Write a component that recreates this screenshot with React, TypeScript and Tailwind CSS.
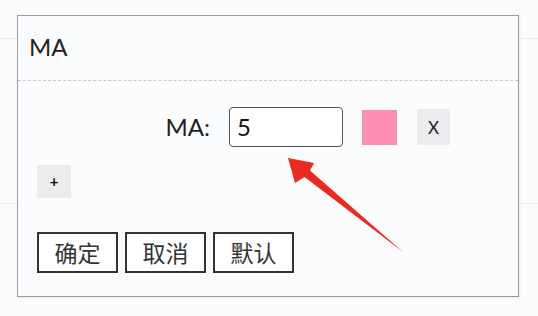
import React from "react";

export default function App() {
  const latin = { fontFamily: "Lato, 'Noto Sans CJK SC', sans-serif" };
  const cjk = { fontFamily: "'Noto Sans CJK SC', 'Noto Sans', sans-serif" };
  return (
    <div className="relative w-[538px] h-[316px] bg-[#fcfcfd] overflow-hidden" style={latin}>
      {/* background rows */}
      <div className="flex flex-col">
        <div className="h-[39px] border-b border-[#ececef]" />
        <div className="h-[165px] border-b border-[#ececef]" />
      </div>

      {/* dialog */}
      <div className="absolute left-[17px] top-[15px] w-[502px] h-[282px] bg-[#fbfcfe] border border-[#9c9ca6] shadow-[1px_1px_2px_rgba(0,0,0,0.08)] flex flex-col">
        <div className="h-[65px] border-b border-dashed border-[#c9c9ce] flex items-center pl-[11px] pb-[2px]">
          <span className="text-[24px] text-[#222] leading-none">MA</span>
        </div>

        <div className="flex items-center pt-[26px]">
          <div className="w-[192px] text-right text-[24px] text-[#222] leading-none">MA:</div>
          <div className="ml-[19px] w-[114px] h-[40px] border-[1.5px] border-[#555] rounded-[4px] bg-white flex items-center pl-[7px] text-[24px] text-[#111] leading-none">
            5
          </div>
          <div className="ml-[19px] w-[35px] h-[35px] bg-[#fd8fb4]" />
          <div className="ml-[20px] w-[33px] h-[36px] bg-[#ececee] flex items-center justify-center text-[17px] text-[#222] leading-none">
            X
          </div>
        </div>

        <div className="pl-[19px] pt-[18px]">
          <div className="w-[34px] h-[33px] bg-[#ececee] flex items-center justify-center text-[15px] font-bold text-[#111] leading-none">
            +
          </div>
        </div>

        <div className="flex gap-[7px] pl-[19px] pt-[34px]" style={cjk}>
          {["确定", "取消", "默认"].map((t) => (
            <div
              key={t}
              className="w-[81px] h-[41px] border-[2px] border-[#333] bg-white flex items-center justify-center text-[23px] text-[#333] leading-none"
            >
              {t}
            </div>
          ))}
        </div>
      </div>

      {/* annotation arrow */}
      <svg className="absolute left-0 top-0" width="538" height="316" viewBox="0 0 538 316">
        <polygon
          points="288,158 314,163 310,170.5 403,252 304.5,177 295,183"
          fill="#ec2a1f"
        />
      </svg>
    </div>
  );
}
